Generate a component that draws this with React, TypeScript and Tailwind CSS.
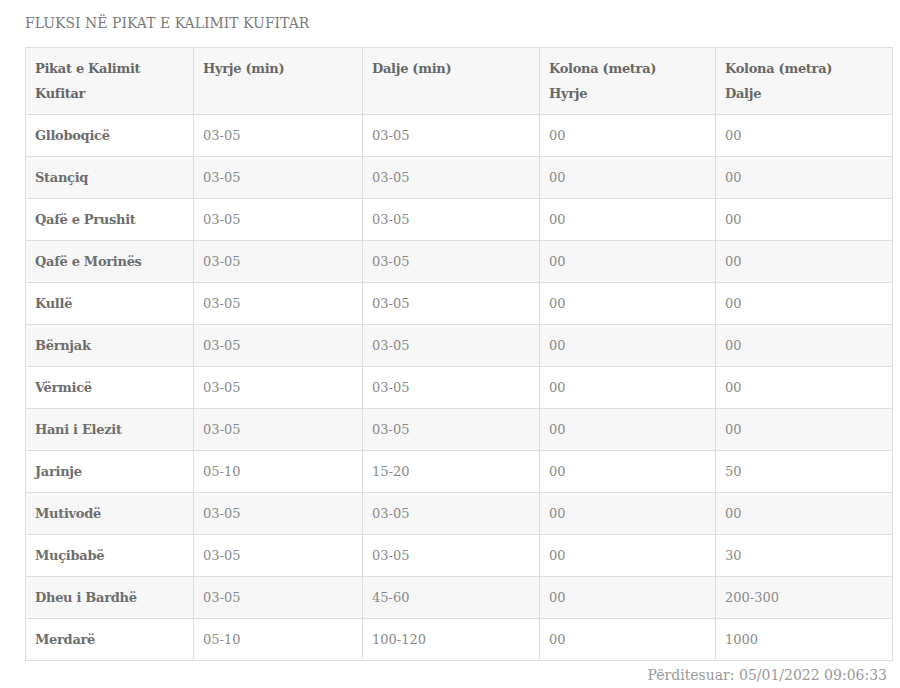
const ROWS: [string, string, string, string, string][] = [
  ["Glloboqicë", "03-05", "03-05", "00", "00"],
  ["Stançiq", "03-05", "03-05", "00", "00"],
  ["Qafë e Prushit", "03-05", "03-05", "00", "00"],
  ["Qafë e Morinës", "03-05", "03-05", "00", "00"],
  ["Kullë", "03-05", "03-05", "00", "00"],
  ["Bërnjak", "03-05", "03-05", "00", "00"],
  ["Vërmicë", "03-05", "03-05", "00", "00"],
  ["Hani i Elezit", "03-05", "03-05", "00", "00"],
  ["Jarinje", "05-10", "15-20", "00", "50"],
  ["Mutivodë", "03-05", "03-05", "00", "00"],
  ["Muçibabë", "03-05", "03-05", "00", "30"],
  ["Dheu i Bardhë", "03-05", "45-60", "00", "200-300"],
  ["Merdarë", "05-10", "100-120", "00", "1000"],
];

const HEADERS = [
  ["Pikat e Kalimit", "Kufitar"],
  ["Hyrje (min)"],
  ["Dalje (min)"],
  ["Kolona (metra)", "Hyrje"],
  ["Kolona (metra)", "Dalje"],
];

const WIDTHS = ["w-[168px]", "w-[169px]", "w-[177px]", "w-[176px]", "w-[177px]"];

export default function App() {
  return (
    <div className="min-h-[688px] bg-white px-[25px] pt-[13px] font-['DejaVu_Serif',serif] text-[13px]">
      <h2 className="mb-[14px] text-[14px] leading-[20px] font-normal uppercase text-[#7a7a7a]">
        Fluksi në pikat e kalimit kufitar
      </h2>

      <table className="w-[867px] table-fixed border-collapse border border-[#dedede]">
        <thead>
          <tr className="bg-[#f7f7f7]">
            {HEADERS.map((lines, i) => (
              <th
                key={i}
                className={`${WIDTHS[i]} border border-[#dedede] pl-[9px] pr-[10px] py-[8px] text-left align-top font-bold leading-[25px] tracking-[-0.3px] text-[#686868]`}
              >
                {lines.map((l) => (
                  <div key={l}>{l}</div>
                ))}
              </th>
            ))}
          </tr>
        </thead>
        <tbody>
          {ROWS.map((row, r) => (
            <tr key={row[0]} className={r % 2 === 1 ? "bg-[#f7f7f7]" : "bg-white"}>
              {row.map((cell, c) => (
                <td
                  key={c}
                  className={
                    c === 0
                      ? "border border-[#dedede] pl-[9px] pr-[10px] py-[8px] leading-[25px] font-bold tracking-[-0.3px] text-[#6e6e6e]"
                      : "border border-[#dedede] pl-[9px] pr-[10px] py-[8px] leading-[25px] text-[#8a8a8a]"
                  }
                >
                  {cell}
                </td>
              ))}
            </tr>
          ))}
        </tbody>
      </table>

      <p className="w-[862px] pt-[2px] text-right text-[14px] leading-[24px] text-[#999]">
        Përditesuar: 05/01/2022 09:06:33
      </p>
    </div>
  );
}
